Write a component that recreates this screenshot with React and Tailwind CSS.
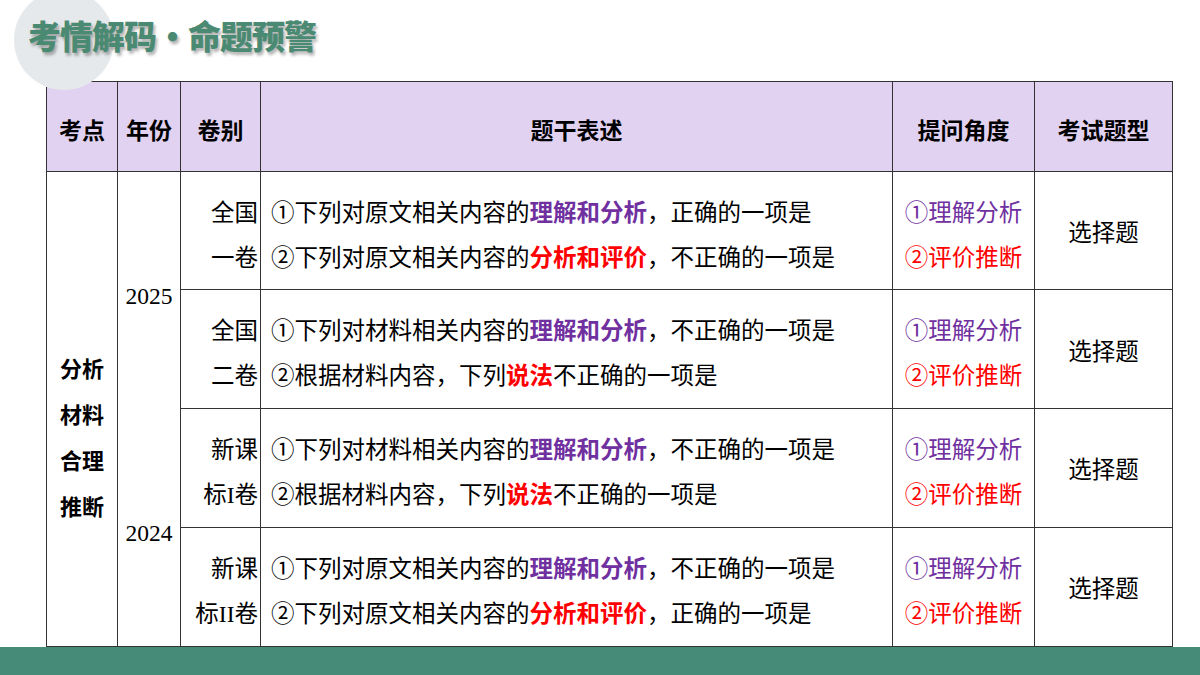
import React from 'react';

const P = ({ children }) => <span className="font-bold text-[#7030a0]">{children}</span>;
const R = ({ children }) => <span className="font-bold text-[#ff0000]">{children}</span>;

const rows = [
  {
    juan: ['全国', '一卷'],
    lines: [
      <>①下列对原文相关内容的<P>理解和分析</P>，正确的一项是</>,
      <>②下列对原文相关内容的<R>分析和评价</R>，不正确的一项是</>,
    ],
  },
  {
    juan: ['全国', '二卷'],
    lines: [
      <>①下列对材料相关内容的<P>理解和分析</P>，不正确的一项是</>,
      <>②根据材料内容，下列<R>说法</R>不正确的一项是</>,
    ],
  },
  {
    juan: ['新课', '标I卷'],
    lines: [
      <>①下列对材料相关内容的<P>理解和分析</P>，不正确的一项是</>,
      <>②根据材料内容，下列<R>说法</R>不正确的一项是</>,
    ],
  },
  {
    juan: ['新课', '标II卷'],
    lines: [
      <>①下列对原文相关内容的<P>理解和分析</P>，不正确的一项是</>,
      <>②下列对原文相关内容的<R>分析和评价</R>，正确的一项是</>,
    ],
  },
];

const serif = { fontFamily: '"Liberation Serif", "Noto Sans CJK SC", serif' };
const sans = { fontFamily: '"Noto Sans CJK SC", sans-serif' };

export default function App() {
  return (
    <div className="relative w-[1200px] h-[675px] bg-white overflow-hidden flex flex-col" style={serif}>
      <div className="absolute left-[14px] top-[-10px] w-[100px] h-[100px] rounded-full bg-[#e6e9eb]" />
      <div className="relative h-[82px] pl-[28px] pt-[19px]">
        <h1
          className="text-[33px] font-black text-[#4a8a73] [text-shadow:2px_3px_3px_rgba(0,0,0,0.3)] leading-none tracking-[-1px]"
          style={sans}
        >
          考情解码·命题预警
        </h1>
      </div>
      <div className="pl-[46px]">
        <table className="border-collapse text-[23.5px] text-black">
          <colgroup>
            <col className="w-[71px]" />
            <col className="w-[63px]" />
            <col className="w-[80px]" />
            <col className="w-[632px]" />
            <col className="w-[142px]" />
            <col className="w-[138px]" />
          </colgroup>
          <thead>
            <tr className="h-[90px] bg-[#e2d2f1]" style={sans}>
              {['考点', '年份', '卷别', '题干表述', '提问角度', '考试题型'].map(h => (
                <th key={h} className="border border-[#333] font-bold text-[23px] p-0 pt-[6px]">{h}</th>
              ))}
            </tr>
          </thead>
          <tbody>
            {rows.map((r, i) => (
              <tr key={i} className="h-[118px]">
                {i === 0 && (
                  <>
                    <td rowSpan={4} className="border border-[#333] p-0 align-middle">
                      <div className="flex flex-col items-center pt-[54px] font-bold text-[22px] leading-[46px]" style={sans}>
                        <span>分析</span><span>材料</span><span>合理</span><span>推断</span>
                      </div>
                    </td>
                    <td rowSpan={4} className="border border-[#333] p-0 align-top">
                      <div className="flex flex-col h-[474px]">
                        <div className="flex-1 flex items-center justify-center pt-[12px]">2025</div>
                        <div className="flex-1 flex items-center justify-center pt-[12px]">2024</div>
                      </div>
                    </td>
                  </>
                )}
                <td className="border border-[#333] p-0 pt-[10px] text-right pr-[2px] leading-[45px] whitespace-nowrap">
                  {r.juan.map(j => <div key={j}>{j}</div>)}
                </td>
                <td className="border border-[#333] px-[10px] pt-[10px] leading-[45px] whitespace-nowrap">
                  {r.lines.map((l, k) => <div key={k}>{l}</div>)}
                </td>
                <td className="border border-[#333] text-center pt-[10px] leading-[45px] whitespace-nowrap">
                  <div className="text-[#7030a0]">①理解分析</div>
                  <div className="text-[#ff0000]">②评价推断</div>
                </td>
                <td className="border border-[#333] text-center pt-[6px]">选择题</td>
              </tr>
            ))}
          </tbody>
        </table>
      </div>
      <div className="mt-auto h-[29px] bg-[#458b78]" />
    </div>
  );
}
